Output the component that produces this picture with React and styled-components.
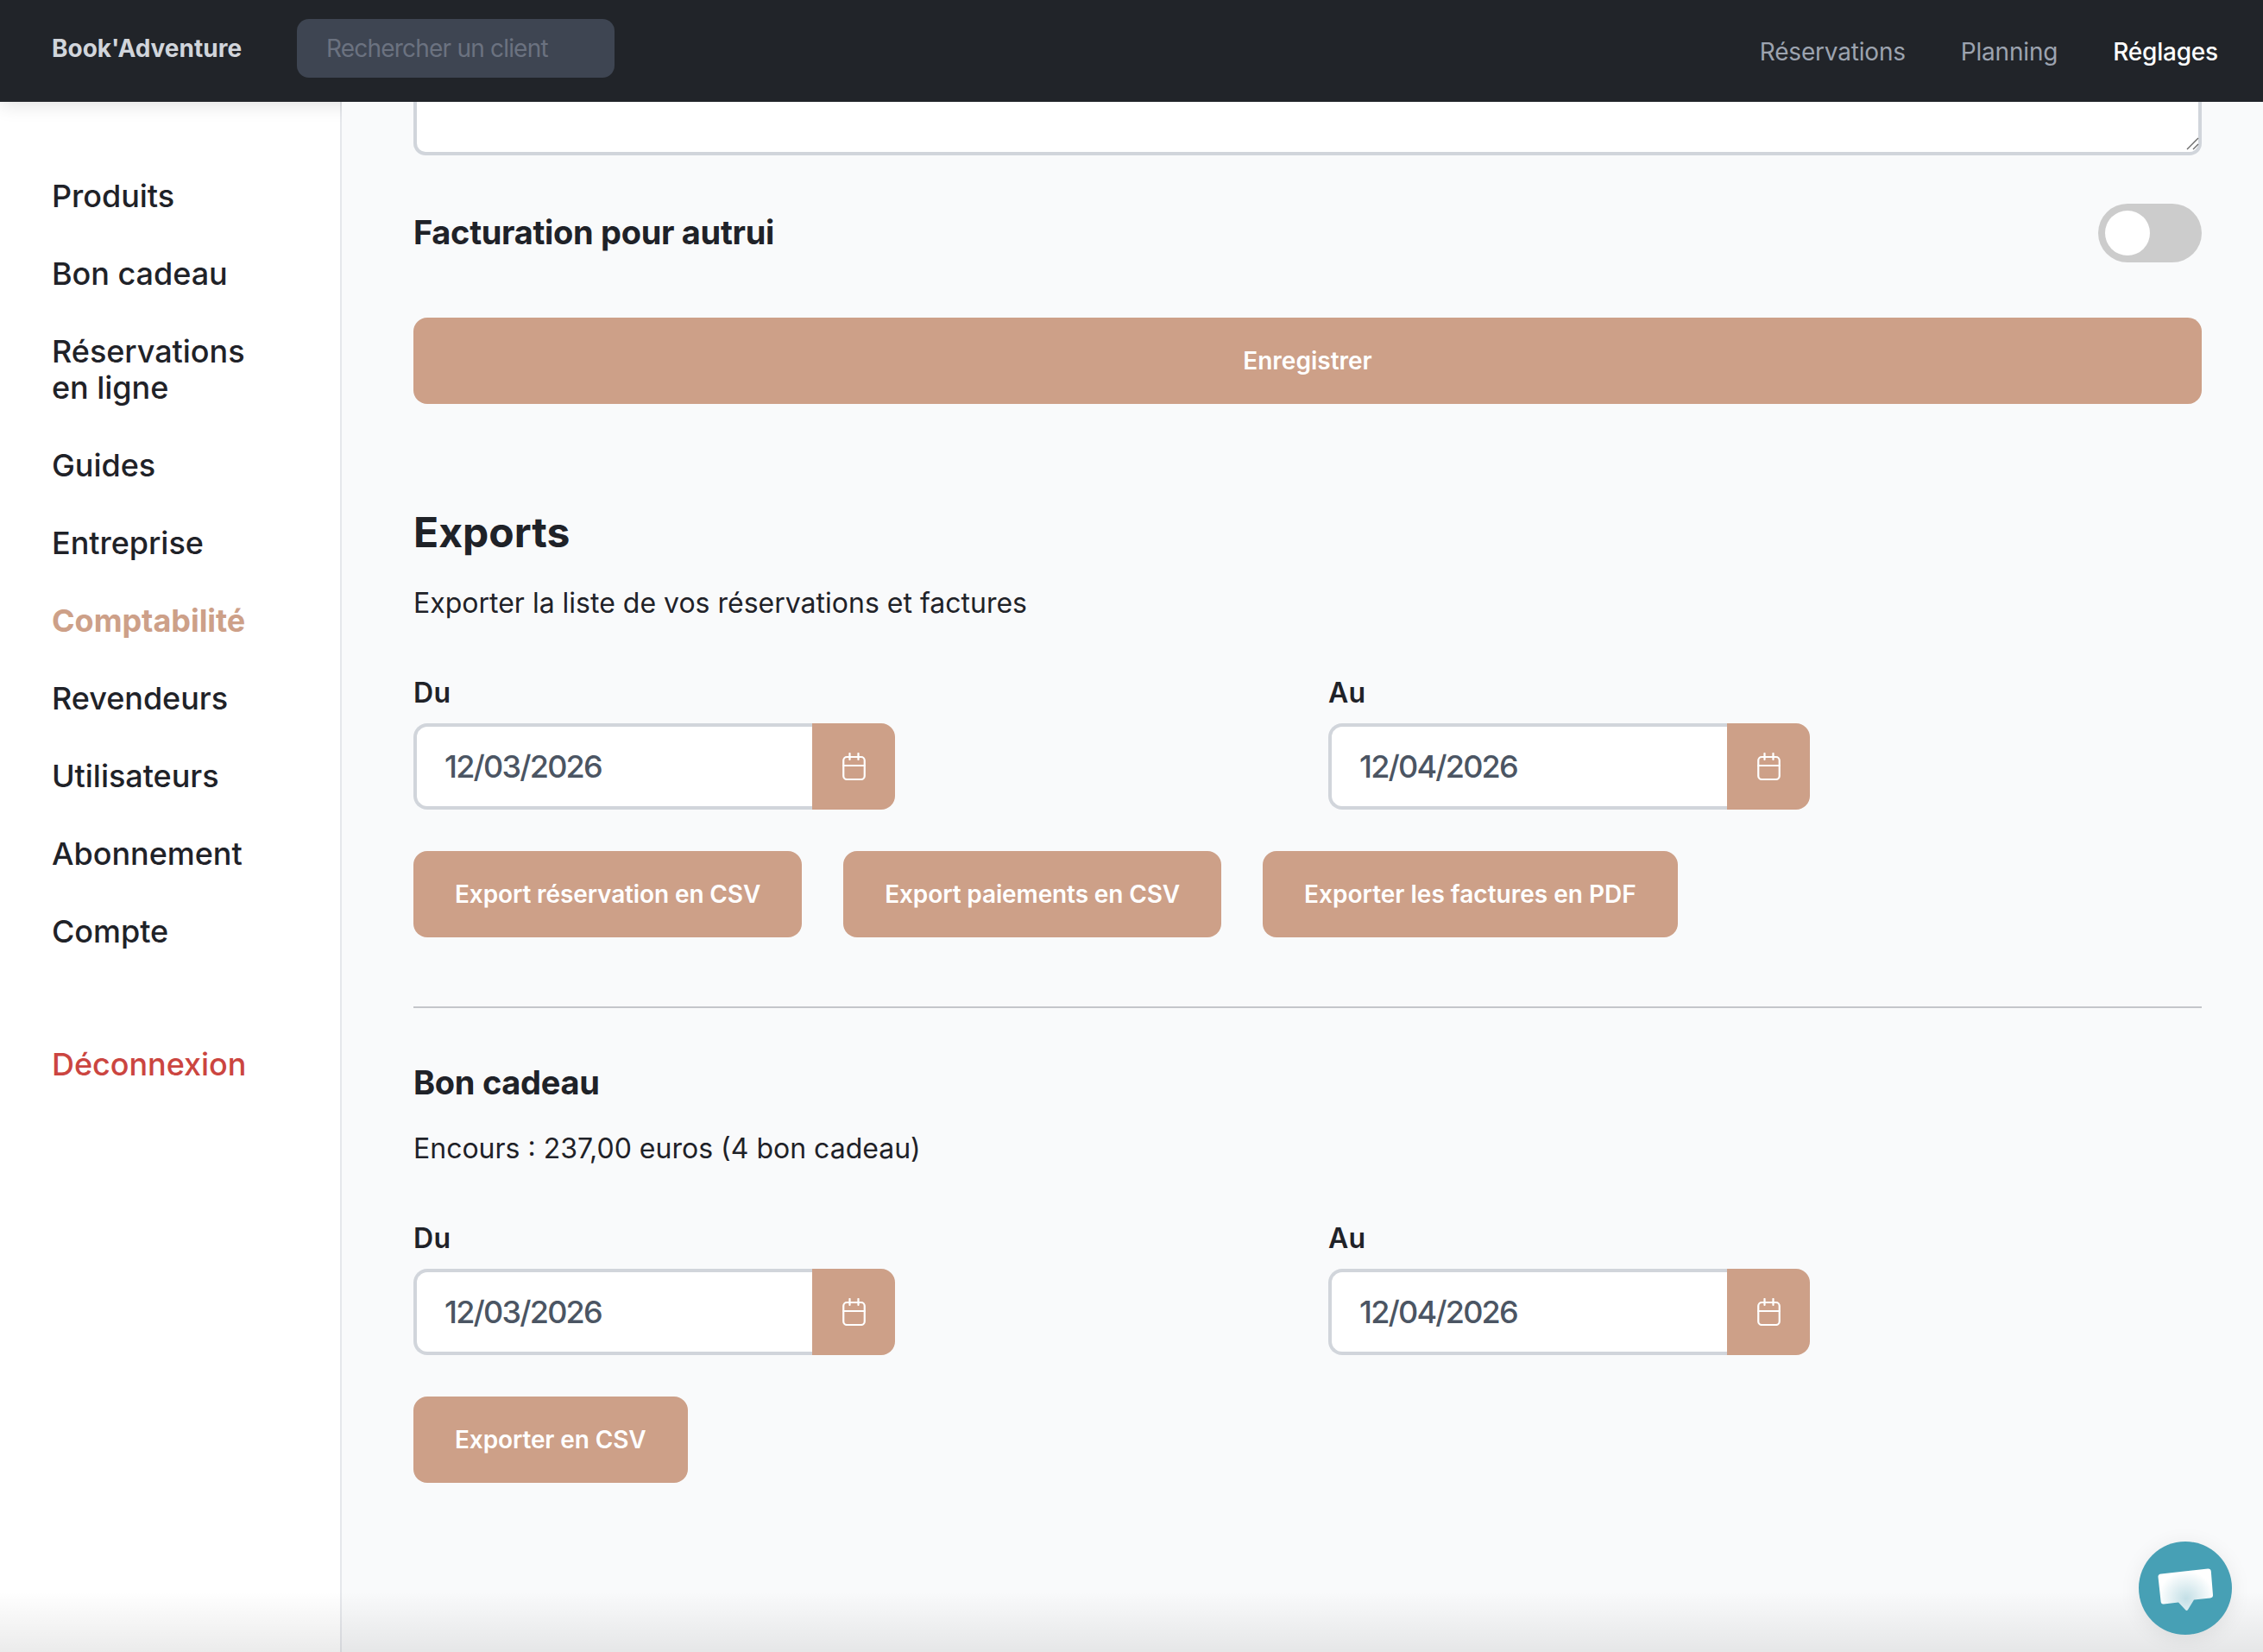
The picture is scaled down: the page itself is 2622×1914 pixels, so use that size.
import React from "react";
import styled, { createGlobalStyle } from "styled-components";

const GlobalStyle = createGlobalStyle`
  html, body {
    margin: 0;
    height: 100%;
    overflow: hidden;
    background: #f9fafb;
  }
  * { box-sizing: border-box; }
  body {
    font-family: Inter, "Noto Sans", sans-serif;
    color: #1f2228;
  }
`;

const ACCENT = "#cda088";

const menu = [
  { label: "Produits" },
  { label: "Bon cadeau" },
  { label: "Réservations en ligne" },
  { label: "Guides" },
  { label: "Entreprise" },
  { label: "Comptabilité", active: true },
  { label: "Revendeurs" },
  { label: "Utilisateurs" },
  { label: "Abonnement" },
  { label: "Compte" },
];

const CalendarIcon = () => (
  <svg width="27" height="32" viewBox="0 0 27 32" fill="none" stroke="#fff" strokeWidth="2.2" strokeLinecap="round">
    <rect x="1.25" y="5" width="24.5" height="26" rx="4" />
    <path d="M8.5 1v7M18.5 1v7M1.25 15h24.5" />
  </svg>
);

const DateField = ({ label, value }) => (
  <div>
    <FieldLabel>{label}</FieldLabel>
    <DateBox>
      <DateInput defaultValue={value} />
      <DateButton type="button">
        <CalendarIcon />
      </DateButton>
    </DateBox>
  </div>
);

const App = () => {
  return (
    <Page>
      <GlobalStyle />
      <TopBar>
        <Brand>Book'Adventure</Brand>
        <Search placeholder="Rechercher un client" />
        <TopLinks>
          <TopLink>Réservations</TopLink>
          <TopLink>Planning</TopLink>
          <TopLink $current>Réglages</TopLink>
        </TopLinks>
      </TopBar>

      <Body>
        <Sidebar>
          {menu.map((item) => (
            <MenuItem key={item.label} $active={item.active}>
              {item.label}
            </MenuItem>
          ))}
          <Logout>Déconnexion</Logout>
        </Sidebar>

        <Main>
          <NotesWrap>
            <Notes />
            <Grip width="15" height="15" viewBox="0 0 15 15" stroke="#6b6b6b" strokeWidth="1.4">
              <path d="M1 14L14 1M8 14L14 8" />
            </Grip>
          </NotesWrap>

          <SwitchRow>
            <SwitchLabel>Facturation pour autrui</SwitchLabel>
            <Switch />
          </SwitchRow>

          <SaveButton>Enregistrer</SaveButton>

          <Heading>Exports</Heading>
          <Text>Exporter la liste de vos réservations et factures</Text>
          <DateGrid>
            <DateField label="Du" value="12/03/2026" />
            <DateField label="Au" value="12/04/2026" />
          </DateGrid>
          <Actions>
            <ActionButton>Export réservation en CSV</ActionButton>
            <ActionButton>Export paiements en CSV</ActionButton>
            <ActionButton $loose>Exporter les factures en PDF</ActionButton>
          </Actions>

          <Divider />

          <SubHeading>Bon cadeau</SubHeading>
          <Text>Encours : 237,00 euros (4 bon cadeau)</Text>
          <DateGrid>
            <DateField label="Du" value="12/03/2026" />
            <DateField label="Au" value="12/04/2026" />
          </DateGrid>
          <Actions>
            <ActionButton>Exporter en CSV</ActionButton>
          </Actions>
        </Main>
      </Body>

      <BottomFade />

      <ChatBubble>
        <svg width="66" height="54" viewBox="0 0 66 54">
          <defs>
            <radialGradient id="bubbleFill" gradientUnits="userSpaceOnUse" cx="34" cy="36" r="32">
              <stop offset="0" stopColor="#c3dfe6" />
              <stop offset="1" stopColor="#ffffff" />
            </radialGradient>
          </defs>
          <path
            d="M5 7.5L59 1.5Q62.5 1.2 62.8 4.5L65 32Q65.2 35 62 35.5L43 37.5L36 49Q34.5 51 33 49L25 40.5L8 42.5Q5 42.9 4.6 39.5L1.5 11Q1.2 8 5 7.5Z"
            fill="url(#bubbleFill)"
          />
        </svg>
      </ChatBubble>
    </Page>
  );
};

export default App;

const Page = styled.div`
  position: relative;
  width: 2622px;
  height: 1914px;
  overflow: hidden;
`;

const TopBar = styled.header`
  position: relative;
  z-index: 1;
  display: flex;
  align-items: center;
  height: 118px;
  padding: 0 52px 0 60px;
  background: #212429;
  box-shadow: 0 4px 20px rgba(0, 0, 0, 0.12);
`;

const Brand = styled.div`
  width: 284px;
  margin-top: -6px;
  font-size: 28px;
  font-weight: 700;
  color: #d1d5db;
`;

const Search = styled.input`
  width: 368px;
  height: 68px;
  margin-top: -6px;
  padding: 0 34px;
  border: none;
  border-radius: 14px;
  background: #3e4552;
  font-family: inherit;
  font-size: 28px;
  letter-spacing: -0.8px;
  color: #d1d5db;
  &::placeholder {
    color: #6b7280;
    opacity: 1;
  }
`;

const TopLinks = styled.nav`
  display: flex;
  gap: 64px;
  margin-top: 1px;
  margin-left: auto;
`;

const TopLink = styled.a`
  font-size: 28px;
  letter-spacing: -0.2px;
  font-weight: ${(p) => (p.$current ? 500 : 400)};
  color: ${(p) => (p.$current ? "#ffffff" : "#9ca3af")};
`;

const Body = styled.div`
  display: flex;
  height: 1796px;
`;

const Sidebar = styled.aside`
  flex: 0 0 396px;
  padding: 88px 70px 0 60px;
  background: #ffffff;
  border-right: 2px solid #e5e7eb;
`;

const MenuItem = styled.div`
  margin-bottom: 48px;
  font-size: 36px;
  line-height: 42px;
  letter-spacing: -0.04px;
  font-weight: ${(p) => (p.$active ? 700 : 500)};
  color: ${(p) => (p.$active ? ACCENT : "#1f2228")};
`;

const Logout = styled(MenuItem)`
  margin-top: 112px;
  color: #cb4540;
`;

const Main = styled.main`
  position: relative;
  z-index: 2;
  flex: 1;
  padding: 0 71px 0 83px;
  background: #f9fafb;
`;

const NotesWrap = styled.div`
  position: relative;
  height: 62px;
`;

const Notes = styled.textarea`
  display: block;
  width: 100%;
  height: 100%;
  border: 4px solid #d1d5db;
  border-top: none;
  border-radius: 0 0 14px 14px;
  background: #ffffff;
  resize: none;
`;

const Grip = styled.svg`
  position: absolute;
  right: 3px;
  bottom: 6px;
`;

const SwitchRow = styled.div`
  display: flex;
  align-items: center;
  justify-content: space-between;
  margin-top: 56px;
  height: 68px;
`;

const SwitchLabel = styled.div`
  margin-top: -2px;
  font-size: 38px;
  font-weight: 700;
  letter-spacing: -0.32px;
`;

const Switch = styled.div`
  position: relative;
  width: 120px;
  height: 68px;
  border-radius: 34px;
  background: #cccccc;
  &::before {
    content: "";
    position: absolute;
    left: 8px;
    top: 8px;
    width: 52px;
    height: 52px;
    border-radius: 50%;
    background: #ffffff;
  }
`;

const PrimaryButton = styled.button`
  height: 100px;
  border: none;
  border-radius: 16px;
  background: ${ACCENT};
  font-family: inherit;
  font-size: 28px;
  font-weight: 600;
  letter-spacing: -0.12px;
  color: #ffffff;
`;

const SaveButton = styled(PrimaryButton)`
  display: block;
  width: 100%;
  margin-top: 64px;
  letter-spacing: 0;
`;

const Heading = styled.h2`
  margin: 116px 0 0;
  font-size: 48px;
  line-height: 66px;
  font-weight: 700;
`;

const SubHeading = styled.h3`
  margin: 61px 0 27px;
  font-size: 38px;
  line-height: 50px;
  font-weight: 700;
  letter-spacing: -0.3px;
`;

const Text = styled.p`
  margin: 24px 0 0;
  font-size: 32px;
  line-height: 50px;
  font-weight: 400;
`;

const DateGrid = styled.div`
  display: grid;
  grid-template-columns: 1fr 1fr;
  gap: 48px;
  margin-top: 59px;
`;

const FieldLabel = styled.div`
  margin-bottom: 15px;
  font-size: 32px;
  line-height: 40px;
  font-weight: 600;
  letter-spacing: 0.3px;
`;

const DateBox = styled.div`
  display: flex;
  width: 558px;
  height: 100px;
`;

const DateInput = styled.input`
  flex: 1;
  min-width: 0;
  padding: 0 32px;
  border: 4px solid #d1d5db;
  border-right: none;
  border-radius: 16px 0 0 16px;
  background: #ffffff;
  font-family: inherit;
  font-size: 36px;
  font-weight: 450;
  letter-spacing: -1.8px;
  color: #4b5563;
`;

const DateButton = styled.button`
  display: flex;
  align-items: center;
  justify-content: center;
  flex: 0 0 96px;
  padding: 0 0 0 1px;
  border: none;
  border-radius: 0 16px 16px 0;
  background: ${ACCENT};
`;

const Actions = styled.div`
  display: flex;
  gap: 48px;
  margin-top: 48px;
`;

const ActionButton = styled(PrimaryButton)`
  padding: 0 48px;
  ${(p) => p.$loose && "letter-spacing: 0.01px;"}
`;

const Divider = styled.hr`
  height: 2px;
  margin: 80px 0 0;
  border: none;
  background: #c4c6ca;
`;

const BottomFade = styled.div`
  position: absolute;
  left: 0;
  right: 0;
  bottom: 0;
  z-index: 3;
  height: 70px;
  background: linear-gradient(to bottom, rgba(0, 0, 0, 0), rgba(0, 0, 0, 0.08));
  pointer-events: none;
`;

const ChatBubble = styled.div`
  position: absolute;
  right: 36px;
  bottom: 20px;
  z-index: 4;
  display: flex;
  align-items: center;
  justify-content: center;
  width: 108px;
  height: 108px;
  padding-top: 5px;
  border-radius: 50%;
  background: #47a0b5;
  box-shadow: 0 4px 24px rgba(0, 0, 0, 0.08);
`;
